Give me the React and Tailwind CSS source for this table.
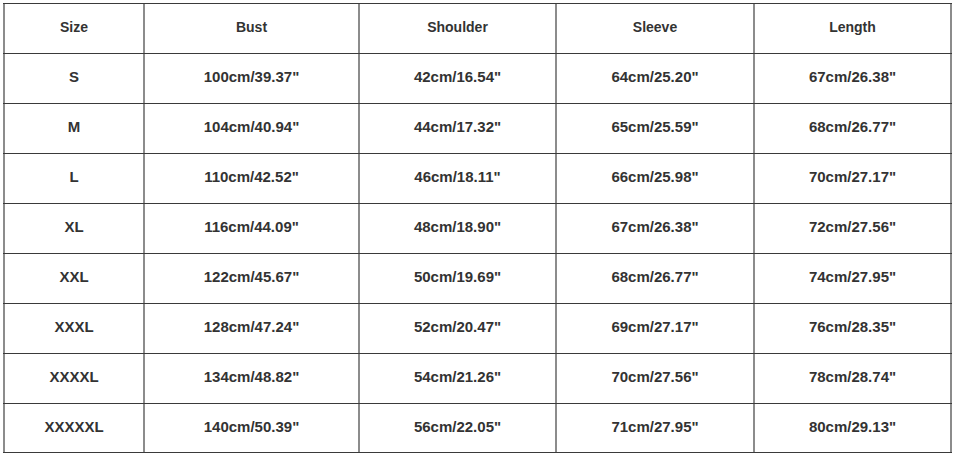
import React from 'react';

const headers = ['Size', 'Bust', 'Shoulder', 'Sleeve', 'Length'];

const rows = [
    ['S', '100cm/39.37"', '42cm/16.54"', '64cm/25.20"', '67cm/26.38"'],
    ['M', '104cm/40.94"', '44cm/17.32"', '65cm/25.59"', '68cm/26.77"'],
    ['L', '110cm/42.52"', '46cm/18.11"', '66cm/25.98"', '70cm/27.17"'],
    ['XL', '116cm/44.09"', '48cm/18.90"', '67cm/26.38"', '72cm/27.56"'],
    ['XXL', '122cm/45.67"', '50cm/19.69"', '68cm/26.77"', '74cm/27.95"'],
    ['XXXL', '128cm/47.24"', '52cm/20.47"', '69cm/27.17"', '76cm/28.35"'],
    ['XXXXL', '134cm/48.82"', '54cm/21.26"', '70cm/27.56"', '78cm/28.74"'],
    ['XXXXXL', '140cm/50.39"', '56cm/22.05"', '71cm/27.95"', '80cm/29.13"'],
];

const widths = ['w-[140px]', 'w-[215px]', 'w-[197px]', 'w-[198px]', 'w-[199px] border-r-2'];

function Row({ cells, header, last }) {
    return (
        <div className={`flex h-[50px] border-t border-[#3a3a3a] ${last ? 'border-b' : ''}`}>
            {cells.map((c, i) => (
                <div
                    key={i}
                    className={`${widths[i]} flex items-center justify-center border-l-2 border-[#8c8c8c] ${header ? 'font-semibold text-[14px] pb-[3px]' : 'font-bold text-[15px] pb-[2px]'}`}
                >
                    {c}
                </div>
            ))}
        </div>
    );
}

export default function App() {
    return (
        <div className="w-[954px] h-[456px] bg-white pt-[3px] pl-[3px] text-[#333]" style={{ fontFamily: '"Liberation Sans", Arial, sans-serif' }}>
            <div className="w-[949px]">
                <Row cells={headers} header />
                {rows.map((r, i) => (
                    <Row key={i} cells={r} last={i === rows.length - 1} />
                ))}
            </div>
        </div>
    );
}
